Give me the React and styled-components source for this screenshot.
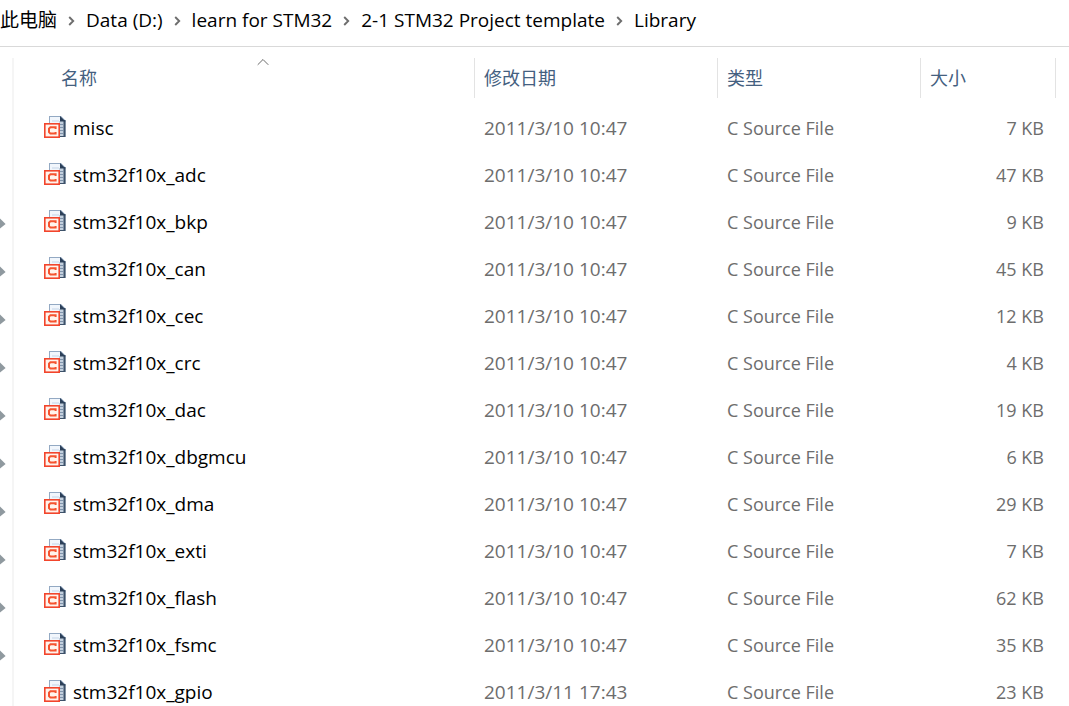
import React from "react";
import styled, { createGlobalStyle } from "styled-components";

const GlobalStyle = createGlobalStyle`
  * {
    box-sizing: border-box;
  }

  body {
    margin: 0;
    background: #fff;
    color: #000;
    font-family: "Open Sans", "Noto Sans CJK SC", sans-serif;
    font-size: 18px;
  }
`;

const Explorer = styled.div`
  display: flex;
  flex-direction: column;
  height: 100vh;
  overflow: hidden;
`;

// address bar
const AddressBar = styled.nav`
  flex: none;
  border-bottom: 1px solid #d9d9d9;

  ol {
    display: flex;
    align-items: center;
    height: 46px;
    margin: 0;
    padding: 0 0 6px;
    list-style: none;
  }

  li {
    display: flex;
    align-items: center;
    white-space: nowrap;
  }

  a {
    color: #000;
    font-size: 19px;
    line-height: 24px;
    text-decoration: none;
  }

  svg {
    margin: 2px 11px 0;
  }
`;

const Body = styled.div`
  display: flex;
  flex: 1;
  min-height: 0;
  padding-top: 11px;
`;

// quick access pane, only the pins are in view
const PinStrip = styled.aside`
  flex: none;
  width: 14px;
  padding-top: 142px;
  border-right: 2px solid #f5f5f5;
`;

const Pin = styled.div`
  display: flex;
  align-items: center;
  height: 48px;
`;

const Files = styled.main`
  flex: 1;
  padding-right: 13px;
`;

const FileTable = styled.table`
  width: 100%;
  table-layout: fixed;
  border-collapse: collapse;

  .date {
    width: 243px;
  }

  .type {
    width: 203px;
  }

  .size {
    width: 135px;
  }
`;

const HeadCell = styled.th`
  height: 46px;
  padding: 0 0 6px ${(props) => (props.$first ? "38px" : "0")};
  font-weight: normal;
`;

const SortButton = styled.button`
  position: relative;
  display: block;
  width: 100%;
  height: 40px;
  padding: 0 9px 2px;
  border: 0;
  border-right: 1px solid #e3e3e3;
  background: none;
  color: #44607f;
  font-family: inherit;
  font-size: 18px;
  font-weight: normal;
  text-align: left;

  svg {
    position: absolute;
    top: 0;
    left: 50%;
    transform: translateX(-50%);
  }
`;

const Cell = styled.td`
  height: 47px;
  padding: 0 12px 0 9px;
  color: #6d6d6d;
  font-size: ${(props) => (props.$wide ? "19px" : "18px")};
  text-align: ${(props) => (props.$right ? "right" : "left")};
  white-space: nowrap;
`;

const NameCell = styled(Cell)`
  padding-left: 30px;
  color: #000;

  div {
    display: flex;
    align-items: center;
    gap: 7px;
  }
`;

const path = ["此电脑", "Data (D:)", "learn for STM32", "2-1 STM32 Project template", "Library"];

const pins = [0, 1, 2, 3, 4, 5, 6, 7, 8, 9];

const files = [
  ["misc", "2011/3/10 10:47", "7 KB"],
  ["stm32f10x_adc", "2011/3/10 10:47", "47 KB"],
  ["stm32f10x_bkp", "2011/3/10 10:47", "9 KB"],
  ["stm32f10x_can", "2011/3/10 10:47", "45 KB"],
  ["stm32f10x_cec", "2011/3/10 10:47", "12 KB"],
  ["stm32f10x_crc", "2011/3/10 10:47", "4 KB"],
  ["stm32f10x_dac", "2011/3/10 10:47", "19 KB"],
  ["stm32f10x_dbgmcu", "2011/3/10 10:47", "6 KB"],
  ["stm32f10x_dma", "2011/3/10 10:47", "29 KB"],
  ["stm32f10x_exti", "2011/3/10 10:47", "7 KB"],
  ["stm32f10x_flash", "2011/3/10 10:47", "62 KB"],
  ["stm32f10x_fsmc", "2011/3/10 10:47", "35 KB"],
  ["stm32f10x_gpio", "2011/3/11 17:43", "23 KB"],
];

const Chevron = () => (
  <svg width="7" height="10" viewBox="0 0 7 10" fill="none" aria-hidden="true">
    <path d="M1.2 1 L5.2 5 L1.2 9" stroke="#6e6e6e" strokeWidth="1.9" />
  </svg>
);

const SortArrow = () => (
  <svg width="12" height="8" viewBox="0 0 12 8" fill="none" aria-hidden="true">
    <path d="M0.7 6.8 L6 1.5 L11.3 6.8" stroke="#6a6a6a" strokeWidth="1" />
  </svg>
);

const PinIcon = () => (
  <svg width="6" height="12" viewBox="0 0 6 12" aria-hidden="true">
    <path d="M0 0.5 L5.6 6 L0 10.5 Z" fill="#8f999f" />
  </svg>
);

const CFileIcon = () => (
  <svg width="22" height="24" viewBox="0 0 22 24" aria-hidden="true">
    <path d="M5 0 H17 L21.5 4.5 V21 H5 Z" fill="#93a9c3" />
    <path d="M6 1 H16 V20 H6 Z" fill="#f1f6fc" />
    <path d="M15 5 H20 V20 H15 Z" fill="#c3d0de" />
    <path d="M19.5 4 H21.5 V21 H16 V20 H19.5 Z" fill="#3d5169" />
    <path d="M16 0 L21.5 5.5 H16 Z" fill="#2c4059" />
    <path d="M16 8.5 H19 M16 11.5 H19 M16 14.5 H19 M16 17.5 H19" stroke="#8195ad" />
    <path d="M8 5 H15" stroke="#c5d5e8" />
    <rect x="0.8" y="7.8" width="14.4" height="13.4" fill="#fff3ec" stroke="#f2452c" strokeWidth="1.6" />
    <path
      d="M11.6 13 V11.2 H6.4 L5 12.6 V16.2 L6.4 17.6 H11.6 V16"
      fill="none"
      stroke="#f5532f"
      strokeWidth="2"
    />
  </svg>
);

const App = () => {
  return (
    <Explorer>
      <GlobalStyle />
      <AddressBar aria-label="此电脑">
        <ol>
          {path.map((folder, i) => (
            <li key={folder}>
              {i > 0 && <Chevron />}
              <a href="#">{folder}</a>
            </li>
          ))}
        </ol>
      </AddressBar>
      <Body>
        <PinStrip>
          {pins.map((pin) => (
            <Pin key={pin}>
              <PinIcon />
            </Pin>
          ))}
        </PinStrip>
        <Files>
          <FileTable>
            <colgroup>
              <col />
              <col className="date" />
              <col className="type" />
              <col className="size" />
            </colgroup>
            <thead>
              <tr>
                <HeadCell $first aria-sort="ascending">
                  <SortButton>
                    名称
                    <SortArrow />
                  </SortButton>
                </HeadCell>
                <HeadCell>
                  <SortButton>修改日期</SortButton>
                </HeadCell>
                <HeadCell>
                  <SortButton>类型</SortButton>
                </HeadCell>
                <HeadCell>
                  <SortButton>大小</SortButton>
                </HeadCell>
              </tr>
            </thead>
            <tbody>
              {files.map(([name, date, size]) => (
                <tr key={name}>
                  <NameCell $wide>
                    <div>
                      <CFileIcon />
                      {name}
                    </div>
                  </NameCell>
                  <Cell $wide>{date}</Cell>
                  <Cell>C Source File</Cell>
                  <Cell $right>{size}</Cell>
                </tr>
              ))}
            </tbody>
          </FileTable>
        </Files>
      </Body>
    </Explorer>
  );
};

export default App;
